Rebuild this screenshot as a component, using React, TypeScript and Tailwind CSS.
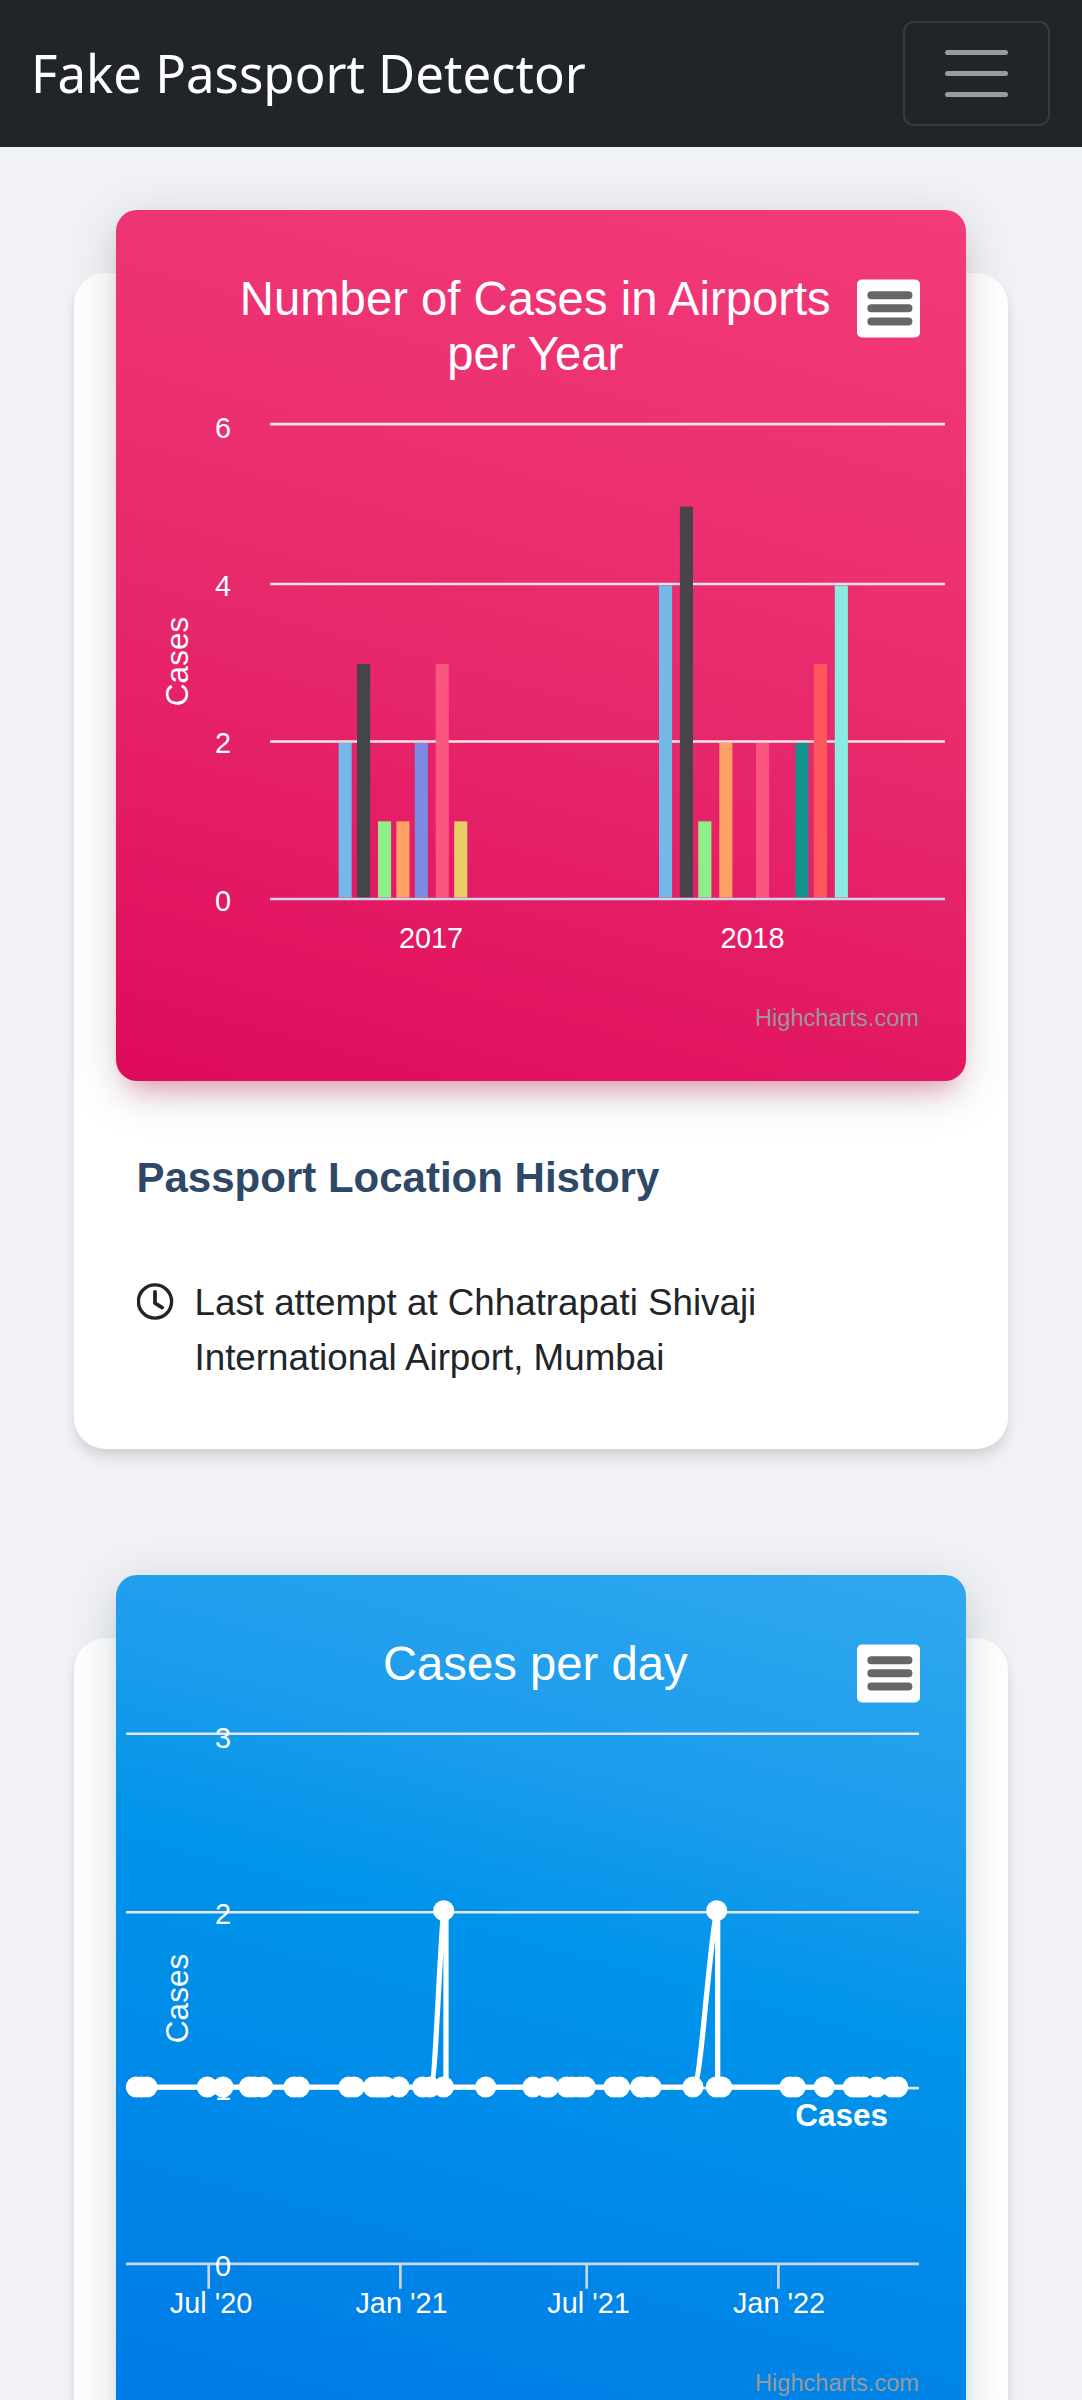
import type { ReactNode } from "react";

const BAR_BASE = 897.6;

const bars = [
  { x: 338.6, top: 743, fill: "#74b7e9" },
  { x: 357, top: 664, fill: "#454549" },
  { x: 378, top: 821.3, fill: "#8eef8a" },
  { x: 396.4, top: 821.3, fill: "#ffa065" },
  { x: 414.8, top: 743, fill: "#7a8be3" },
  { x: 435.7, top: 664, fill: "#fa567f" },
  { x: 454.2, top: 821.3, fill: "#e8cf66" },
  { x: 659, top: 585.6, fill: "#74b7e9" },
  { x: 679.9, top: 506.6, fill: "#454549" },
  { x: 698.3, top: 821.3, fill: "#8eef8a" },
  { x: 719.3, top: 743, fill: "#ffa065" },
  { x: 756, top: 743, fill: "#fa567f" },
  { x: 795.4, top: 743, fill: "#15918d" },
  { x: 813.8, top: 664, fill: "#fd575d" },
  { x: 834.8, top: 585.6, fill: "#8aebe1" },
];

const dailyPoints = [
  136.3, 141.5, 147, 207.3, 223, 249.3, 254.7, 262.7, 294, 299.3, 349, 354.3, 373.3, 378, 382.7, 385.7, 399, 422.7,
  430, 443.5, 485.7, 533, 546, 548.7, 566.7, 572, 580, 585.3, 614, 619.3, 640.7, 643, 651, 693, 716.3, 721.7, 790,
  795.3, 824.3, 853.3, 858.3, 863.3, 876.7, 892.3, 897.7,
];

function ChartMenu({ y }: { y: number }) {
  return (
    <g>
      <rect x="857" y={y} width="63" height="58" rx="5" fill="#fff" />
      <path
        d={`M871.3 ${y + 15.7}h37.2M871.3 ${y + 28.8}h37.2M871.3 ${y + 42}h37.2`}
        stroke="#666"
        strokeWidth="7.9"
        strokeLinecap="round"
      />
    </g>
  );
}

function YearChart() {
  return (
    <svg
      className="block h-[871px] w-[850px] font-['Liberation_Sans',Arial,sans-serif]"
      viewBox="116 210 850 871"
      fill="none"
    >
      <g fill="#fff" fontSize="47.25" textAnchor="middle">
        <text x="535.3" y="315">Number of Cases in Airports</text>
        <text x="535.3" y="370">per Year</text>
      </g>
      <ChartMenu y={279.5} />
      <path d="M270 424.1h675M270 584h675M270 741.5h675" stroke="#e6e6e6" strokeWidth="2.625" />
      {bars.map((b) => (
        <rect key={b.x} x={b.x} y={b.top} width="13.1" height={BAR_BASE - b.top} fill={b.fill} />
      ))}
      <path d="M270 899h675" stroke="#ccd6eb" strokeWidth="2.625" />
      <g fill="#fff" fontSize="28.875" textAnchor="end">
        <text x="231" y="437.5">6</text>
        <text x="231" y="595.5">4</text>
        <text x="231" y="753">2</text>
        <text x="231" y="910.7">0</text>
      </g>
      <text transform="translate(187.8 661.5) rotate(-90)" fill="#fff" fontSize="31.5" textAnchor="middle">
        Cases
      </text>
      <g fill="#fff" fontSize="28.875" textAnchor="middle">
        <text x="431" y="948">2017</text>
        <text x="752.5" y="948">2018</text>
      </g>
      <text x="919" y="1026" fill="#999" fontSize="23.625" textAnchor="end">
        Highcharts.com
      </text>
    </svg>
  );
}

function DayChart() {
  return (
    <svg
      className="block h-[871px] w-[850px] font-['Liberation_Sans',Arial,sans-serif]"
      viewBox="116 1575 850 871"
      fill="none"
    >
      <text x="535.3" y="1679.7" fill="#fff" fontSize="47.25" textAnchor="middle">
        Cases per day
      </text>
      <ChartMenu y={1644.5} />
      <path d="M126 1733.7h793M126 1912.2h793M126 2088.1h793" stroke="#e6e6e6" strokeWidth="2.625" />
      <path
        d="M126 2263.9h793M208.7 2264v24.8M400.4 2264v24.8M586.7 2264v24.8M778.4 2264v24.8"
        stroke="#ccd6eb"
        strokeWidth="2.625"
      />
      <path
        d="M136 2087H430C435.5 2087 437.5 1990 443.5 1911H446V2087H693C701 2087 706 1975 716.5 1911H717.7V2087H897.7"
        stroke="#fff"
        strokeWidth="5.25"
        strokeLinejoin="round"
      />
      {dailyPoints.map((x) => (
        <circle key={x} cx={x} cy="2087" r="10.5" fill="#fff" />
      ))}
      <circle cx="443.7" cy="1910.7" r="10.5" fill="#fff" />
      <circle cx="716.7" cy="1910.7" r="10.5" fill="#fff" />
      <g fill="#fff" fontSize="28.875" textAnchor="end">
        <text x="231" y="1747.7">3</text>
        <text x="231" y="1924">2</text>
        <text x="231" y="2099.7">1</text>
        <text x="231" y="2275.5">0</text>
      </g>
      <text transform="translate(187.8 1998.5) rotate(-90)" fill="#fff" fontSize="31.5" textAnchor="middle">
        Cases
      </text>
      <g fill="#fff" fontSize="28.875" textAnchor="middle">
        <text x="211" y="2312.7">Jul '20</text>
        <text x="401.5" y="2312.7">Jan '21</text>
        <text x="588.5" y="2312.7">Jul '21</text>
        <text x="779" y="2312.7">Jan '22</text>
      </g>
      <text x="795.3" y="2125.7" fill="#fff" fontSize="31.5" fontWeight="bold">
        Cases
      </text>
      <text x="919" y="2390.7" fill="#999" fontSize="23.625" textAnchor="end">
        Highcharts.com
      </text>
    </svg>
  );
}

function Card({ chart, headerClass, children }: { chart: ReactNode; headerClass: string; children?: ReactNode }) {
  return (
    <section className="h-[1175.5px] rounded-[31.5px] bg-white px-[42px] shadow-[0_10.5px_15.75px_-2.6px_rgba(0,0,0,0.1),0_5.25px_10.5px_-2.6px_rgba(0,0,0,0.06)]">
      <div className={`-mt-[63px] h-[871px] overflow-clip rounded-[21px] ${headerClass}`}>{chart}</div>
      {children}
    </section>
  );
}

function ClockIcon() {
  return (
    <svg className="mt-[8px] size-[37px] shrink-0" viewBox="0 0 37 37" fill="none" stroke="#212529">
      <circle cx="18" cy="18.5" r="16.6" strokeWidth="3.4" />
      <path d="M18 8.8v11.4l7.2 4.4" strokeWidth="3.8" strokeLinecap="round" strokeLinejoin="round" />
    </svg>
  );
}

export default function App() {
  return (
    <div className="h-[2400px] overflow-hidden bg-[#f0f2f5] font-['Liberation_Sans',Arial,sans-serif] text-[#212529]">
      <header className="flex h-[147px] items-center justify-between bg-[#212529] pr-8 pl-[31px]">
        <span className="mb-[3px] origin-left scale-x-[0.97] font-['Noto_Sans',sans-serif] text-[52.5px] leading-[79px] whitespace-nowrap text-white">
          Fake Passport Detector
        </span>
        <button
          aria-label="Toggle navigation"
          className="flex h-[105px] w-[147px] flex-col items-center justify-center gap-4 rounded-[10.5px] border-2 border-white/10"
        >
          <span className="h-[5px] w-[63px] rounded-full bg-[#9b9b9d]" />
          <span className="h-[5px] w-[63px] rounded-full bg-[#9b9b9d]" />
          <span className="h-[5px] w-[63px] rounded-full bg-[#9b9b9d]" />
        </button>
      </header>

      <main className="flex flex-col gap-[189.5px] pt-[126px] pr-[74px] pl-[73.5px]">
        <Card
          chart={<YearChart />}
          headerClass="bg-[linear-gradient(195deg,#f33b79,#e82a6d_50%,#e21461_85%,#de0a5b)] shadow-[0_10.5px_52.5px_0_rgba(0,0,0,0.14),0_18.4px_26.25px_-13.1px_rgba(233,30,99,0.4)]"
        >
          <div className="px-[21px] pt-[65px]">
            <h6 className="text-[42px] leading-[63px] font-bold text-[#2e4868]">Passport Location History</h6>
            <div className="mt-[66px] flex gap-[21px] text-[36.75px] leading-[55.1px]">
              <ClockIcon />
              <p>
                Last attempt at Chhatrapati Shivaji
                <br />
                International Airport, Mumbai
              </p>
            </div>
          </div>
        </Card>
        <Card
          chart={<DayChart />}
          headerClass="bg-[linear-gradient(195deg,#30a8ee,#1c9ced_27%,#0f98eb_35%,#0094ea_43%,#0079e5)] shadow-[0_10.5px_52.5px_0_rgba(0,0,0,0.14),0_18.4px_26.25px_-13.1px_rgba(0,188,212,0.4)]"
        />
      </main>
    </div>
  );
}
